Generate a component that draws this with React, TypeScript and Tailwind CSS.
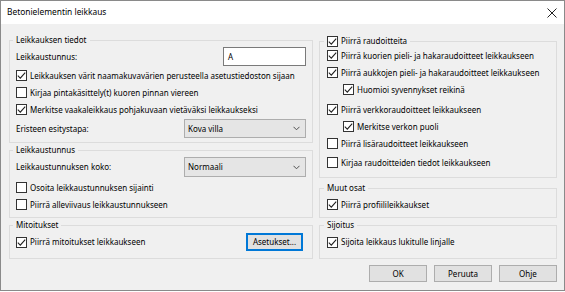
import type { ReactNode } from "react";

function Check({ checked }: { checked?: boolean }) {
  return (
    <span className="w-[11px] h-[11px] shrink-0 border border-[#333333] bg-white flex items-center justify-center">
      {checked && (
        <svg width="9" height="9" viewBox="0 0 9 9">
          <polyline points="0.8,4.6 3.3,7.1 8.2,1.6" fill="none" stroke="#1f1f1f" strokeWidth="1.1" />
        </svg>
      )}
    </span>
  );
}

function CheckRow({ checked, label, indent, className = "" }: { checked?: boolean; label: string; indent?: boolean; className?: string }) {
  return (
    <div className={`flex items-center h-[17px] gap-[3px] ${indent ? "pl-[16px]" : ""} ${className}`}>
      <Check checked={checked} />
      <span className="whitespace-nowrap">{label}</span>
    </div>
  );
}

function Group({ legend, className = "", children }: { legend: ReactNode; className?: string; children: ReactNode }) {
  return (
    <fieldset className={`border border-[#dcdcdc] min-w-0 ${className}`}>
      <legend className="ml-[-3px] px-[3px] h-[12px] leading-[12px] flex items-center">{legend}</legend>
      {children}
    </fieldset>
  );
}

function Select({ value }: { value: string }) {
  return (
    <div className="w-[122px] h-full bg-[#e5e5e5] border border-[#adadad] flex items-center justify-between pl-[3px] pr-[5px]">
      <span>{value}</span>
      <svg width="7" height="5" viewBox="0 0 7 5">
        <polyline points="0.5,0.8 3.5,3.8 6.5,0.8" fill="none" stroke="#505050" strokeWidth="1" />
      </svg>
    </div>
  );
}

function DlgButton({ label }: { label: string }) {
  return (
    <div className="w-[58px] h-[17px] bg-[#e1e1e1] border border-[#adadad] flex items-center justify-center">
      {label}
    </div>
  );
}

export default function App() {
  return (
    <div className="w-[565px] h-[291px] border border-[#8a8a8a] flex flex-col bg-[#f0f0f0] text-black text-[8px] font-['Noto_Sans',sans-serif]">
      {/* Otsikkopalkki */}
      <div className="h-[23px] bg-white flex items-center justify-between pl-[6px] pr-[7px] shrink-0">
        <span className="text-[8.4px]">Betonielementin leikkaus</span>
        <svg width="10" height="10" viewBox="0 0 10 10">
          <path d="M0.5 0.5 L9.5 9.5 M9.5 0.5 L0.5 9.5" stroke="#222" strokeWidth="1" />
        </svg>
      </div>

      <div className="flex-1 pt-[10px] pl-[8px] pr-[7px]">
        <div className="flex gap-[6px]">
          {/* Vasen sarake */}
          <div className="w-[304px] flex flex-col">
            <Group legend="Leikkauksen tiedot" className="px-[6px] pb-[4px]">
              <div className="mt-[1px] h-[19px] flex items-center justify-between">
                <span>Leikkaustunnus:</span>
                <div className="w-[83px] h-full bg-white border border-[#7a7a7a] pl-[4px] flex items-center">A</div>
              </div>
              <CheckRow checked label="Leikkauksen värit naamakuvavärien perusteella asetustiedoston sijaan" className="mt-[1px]" />
              <CheckRow label="Kirjaa pintakäsittely(t) kuoren pinnan viereen" />
              <CheckRow checked label="Merkitse vaakaleikkaus pohjakuvaan vietäväksi leikkaukseksi" />
              <div className="mt-[1px] h-[19px] flex items-center justify-between">
                <span>Eristeen esitystapa:</span>
                <Select value="Kova villa" />
              </div>
            </Group>

            <Group legend="Leikkaustunnus" className="mt-[1px] px-[6px] pb-[4px]">
              <div className="mt-[1px] h-[20px] flex items-center justify-between">
                <span>Leikkaustunnuksen koko:</span>
                <Select value="Normaali" />
              </div>
              <CheckRow label="Osoita leikkaustunnuksen sijainti" className="mt-[2px]" />
              <CheckRow label="Piirrä alleviivaus leikkaustunnukseen" />
            </Group>

            <Group legend="Mitoitukset" className="mt-[1px] px-[6px] pb-[6px]">
              <div className="mt-[1px] h-[20px] flex items-center justify-between">
                <div className="flex items-center gap-[3px]">
                  <Check checked />
                  <span>Piirrä mitoitukset leikkaukseen</span>
                </div>
                <div className="mr-[3px] w-[57px] h-[18px] bg-[#e1e1e1] border border-[#0078d7] shadow-[inset_0_0_0_1px_#0078d7] flex items-center justify-center">
                  Asetukset...
                </div>
              </div>
            </Group>
          </div>

          {/* Oikea sarake */}
          <div className="w-[238px] flex flex-col">
            <Group
              legend={
                <span className="flex items-center gap-[3px]">
                  <Check checked />
                  <span>Piirrä raudoitteita</span>
                </span>
              }
              className="mt-[1px] px-[7px] pb-[6px]"
            >
              <CheckRow checked label="Piirrä kuorien pieli- ja hakaraudoitteet leikkaukseen" />
              <CheckRow checked label="Piirrä aukkojen pieli- ja hakaraudoitteet leikkaukseen" />
              <CheckRow checked indent label="Huomioi syvennykset reikinä" />
              <CheckRow checked label="Piirrä verkkoraudoitteet leikkaukseen" className="mt-[3px]" />
              <CheckRow checked indent label="Merkitse verkon puoli" />
              <CheckRow label="Piirrä lisäraudoitteet leikkaukseen" />
              <CheckRow label="Kirjaa raudoitteiden tiedot leikkaukseen" className="mt-[2px]" />
            </Group>

            <Group legend="Muut osat" className="mt-[4px] px-[7px] pb-[4px]">
              <CheckRow checked label="Piirrä profiilileikkaukset" className="mt-[2px]" />
            </Group>

            <Group legend="Sijoitus" className="mt-[1px] px-[7px] pb-[6px]">
              <div className="mt-[1px] h-[20px] flex items-center">
                <CheckRow checked label="Sijoita leikkaus lukitulle linjalle" />
              </div>
            </Group>
          </div>
        </div>

        {/* Painikkeet */}
        <div className="mt-[6px] flex justify-end gap-[7px]">
          <DlgButton label="OK" />
          <DlgButton label="Peruuta" />
          <DlgButton label="Ohje" />
        </div>
      </div>
    </div>
  );
}
